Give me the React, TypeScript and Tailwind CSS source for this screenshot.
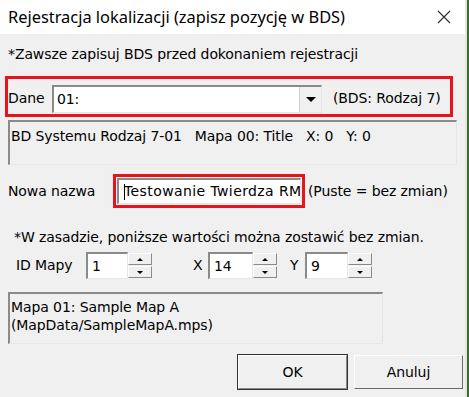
import React from "react";

const T = { fontFamily: '"DejaVu Sans", sans-serif' };

function Sunken({ className = "", children }: { className?: string; children?: React.ReactNode }) {
  return (
    <div className={"border-t-2 border-l-2 border-t-[#8a8a8a] border-l-[#8a8a8a] border-r border-b border-r-[#e6e6e6] border-b-[#e6e6e6] " + className}>
      {children}
    </div>
  );
}

function Spin({ value, w }: { value: string; w: number }) {
  return (
    <div className="flex h-[27px]" style={{ width: w }}>
      <Sunken className="flex-1 bg-white flex items-center pl-[4px] text-[14px]">
        <span>{value}</span>
      </Sunken>
      <div className="w-[24px] flex flex-col gap-[1px] py-[1px]">
        <div className="flex-1 bg-[#f0f0f0] border border-t-white border-l-white border-r-[#8a8a8a] border-b-[#8a8a8a] flex items-center justify-center">
          <div className="w-0 h-0 border-l-[3px] border-r-[3px] border-b-[3px] border-l-transparent border-r-transparent border-b-black" />
        </div>
        <div className="flex-1 bg-[#f0f0f0] border border-t-white border-l-white border-r-[#8a8a8a] border-b-[#8a8a8a] flex items-center justify-center">
          <div className="w-0 h-0 border-l-[3px] border-r-[3px] border-t-[3px] border-l-transparent border-r-transparent border-t-black" />
        </div>
      </div>
    </div>
  );
}

export default function App() {
  return (
    <div className="w-[469px] h-[397px] bg-[#f0f0f0] flex overflow-hidden text-black tracking-[-0.1px]" style={T}>
      <div className="w-[465px] flex flex-col">
        <div className="h-[34px] bg-white flex items-center pl-[8px] pr-[14px]">
          <span className="text-[16.4px] flex-1 tracking-normal" style={{ fontFamily: '"Noto Sans", sans-serif' }}>
            Rejestracja lokalizacji (zapisz pozycję w BDS)
          </span>
          <svg width="14" height="14" viewBox="0 0 14 14">
            <path d="M1 1 L13 13 M13 1 L1 13" stroke="#333" strokeWidth="1.2" />
          </svg>
        </div>
        <div className="mt-[10px] h-[20px] flex items-center pl-[8px] text-[14px]">
          *Zawsze zapisuj BDS przed dokonaniem rejestracji
        </div>
        <div className="mt-[12px] ml-[5px] w-[448px] h-[41px] border-[3px] border-[#e8141c] flex items-end pb-[1px]">
          <span className="text-[14px] w-[44px] pb-[4px]">Dane</span>
          <Sunken className="w-[270px] h-[28px] bg-white flex items-center">
            <span className="flex-1 pl-[3px] text-[14px]">01:</span>
            <div className="w-[22px] h-full flex items-center justify-center bg-[#f0f0f0] border-l border-[#d0d0d0]">
              <div className="w-0 h-0 border-l-[5px] border-r-[5px] border-t-[5px] border-l-transparent border-r-transparent border-t-black" />
            </div>
          </Sunken>
          <span className="text-[14px] ml-[11px] pb-[4px] whitespace-nowrap">(BDS: Rodzaj 7)</span>
        </div>
        <Sunken className="mt-[3px] ml-[8px] w-[449px] h-[45px] pl-[1px] pt-[5px] text-[14px] leading-[18px] whitespace-pre">
          {"BD Systemu Rodzaj 7-01   Mapa 00: Title   X: 0   Y: 0"}
        </Sunken>
        <div className="mt-[9px] h-[34px] flex items-center">
          <span className="pl-[8px] w-[113px] text-[14px]">Nowa nazwa</span>
          <div className="w-[192px] h-[34px] border-[3px] border-[#e8141c] p-[1px]">
            <Sunken className="h-full bg-white flex items-center overflow-hidden whitespace-nowrap pl-[5px] text-[14px] tracking-[0.4px]">
              <span className="w-[1px] h-[16px] bg-black mr-[-1px] shrink-0" />
              <span>Testowanie Twierdza RM</span>
            </Sunken>
          </div>
          <span className="ml-[3px] text-[14px] whitespace-nowrap">(Puste = bez zmian)</span>
        </div>
        <div className="mt-[19px] h-[20px] flex items-center pl-[14px] text-[14px] whitespace-nowrap">
          *W zasadzie, poniższe wartości można zostawić bez zmian.
        </div>
        <div className="mt-[5px] h-[27px] flex items-center text-[14px]">
          <span className="pl-[16px] w-[86px] whitespace-nowrap">ID Mapy</span>
          <Spin value="1" w={66} />
          <span className="ml-[41px] w-[15px]">X</span>
          <Spin value="14" w={69} />
          <span className="ml-[13px] w-[15px]">Y</span>
          <Spin value="9" w={67} />
        </div>
        <Sunken className="mt-[13px] ml-[8px] w-[375px] h-[52px] pl-[1px] pt-[4px] text-[14px] leading-[18px]">
          <div>Mapa 01: Sample Map A</div>
          <div>(MapData/SampleMapA.mps)</div>
        </Sunken>
        <div className="mt-[10px] flex pl-[237px] gap-[6px]">
          <div className="w-[111px] h-[36px] border border-[#333] flex">
            <div className="flex-1 border border-t-white border-l-white border-r-[#8a8a8a] border-b-[#8a8a8a] flex items-center justify-center text-[14px]">
              OK
            </div>
          </div>
          <div className="w-[109px] h-[34px] mt-[1px] border border-t-white border-l-white border-r-[#6a6a6a] border-b-[#6a6a6a] flex items-center justify-center text-[14px]">
            Anuluj
          </div>
        </div>
      </div>
      <div className="w-[2px] bg-[#e4e4e4]" />
      <div className="w-[2px] bg-[#3d6b2c]" />
    </div>
  );
}
